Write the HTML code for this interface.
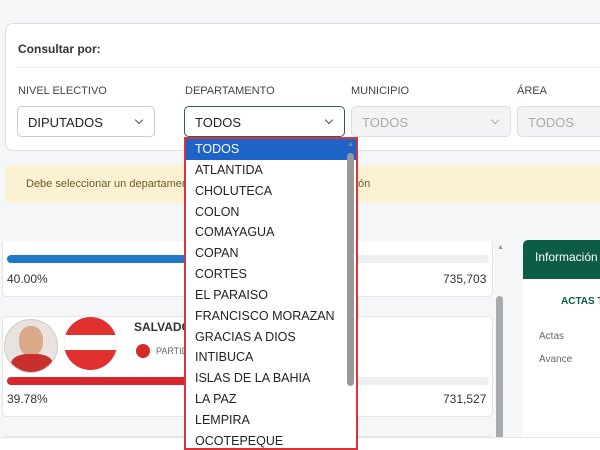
<!DOCTYPE html>
<html><head><style>
*{box-sizing:border-box;margin:0;padding:0}
html,body{width:600px;height:450px;overflow:hidden}
body{background:#f5f6f8;font-family:"Liberation Sans",sans-serif;position:relative;color:#333}
.abs{position:absolute;white-space:nowrap}
.card{left:5px;top:23px;width:620px;height:128px;background:#fff;border:1px solid #dcdfe3;border-radius:8px}
.lbl{font-size:11px;color:#444;top:85px}
.sel{top:106px;height:31px;border:1px solid #c8ccd1;border-radius:5px;background:#fff;font-size:13px;padding:8px 10px;color:#222}
.sel.dis{background:#f2f3f4;color:#aaa;border-color:#dcdfe2}
.chev{position:absolute;right:12px;top:10px;width:6px;height:6px;border-right:1.2px solid #555;border-bottom:1.2px solid #555;transform:rotate(45deg)}
.dis .chev{border-color:#aaa}
.alert{left:5px;top:165px;width:600px;height:38px;background:#fcf2d3;font-size:11px;color:#6b5a2a;padding:13px 0 0 21px}
.pc{background:#fff;border:1px solid #e2e4e7;border-radius:5px}
.dd{left:184px;top:137px;width:174px;height:313px;background:#fff;border:2px solid #d8343a;overflow:hidden}
.dd div{height:20.85px;font-size:12.5px;padding:3px 0 0 9px;color:#222}
</style></head><body>
<div class="abs card"></div>
<div class="abs" style="left:18px;top:42px;font-size:12px;font-weight:bold;color:#333">Consultar por:</div>
<div class="abs" style="left:17px;top:67px;width:590px;height:1px;background:#eceef0"></div>
<div class="abs lbl" style="left:18px">NIVEL ELECTIVO</div>
<div class="abs lbl" style="left:185px">DEPARTAMENTO</div>
<div class="abs lbl" style="left:351px">MUNICIPIO</div>
<div class="abs lbl" style="left:517px">ÁREA</div>
<div class="abs sel" style="left:17px;width:138px">DIPUTADOS<span class="chev"></span></div>
<div class="abs sel" style="left:184px;width:161px;border-color:#2f5d56">TODOS<span class="chev"></span></div>
<div class="abs sel dis" style="left:351px;width:160px">TODOS<span class="chev"></span></div>
<div class="abs sel dis" style="left:517px;width:100px">TODOS</div>
<div class="abs alert">Debe seleccionar un departamento y municipio para ver la información</div>
<div class="abs" style="left:0;top:241px;width:505px;height:196px;overflow:hidden">
 <div class="abs pc" style="left:2px;top:-20px;width:491px;height:76px">
  <div class="abs" style="left:4px;top:-5px;width:46px;height:20px;border-radius:0 0 23px 23px;background:#cfe0ef"></div>
  <div class="abs" style="left:66px;top:-5px;width:44px;height:20px;border-radius:0 0 22px 22px;background:#2a8fd0"></div>
  <div class="abs" style="left:4px;top:33px;width:482px;height:8px;border-radius:4px;background:#eceef0"></div>
  <div class="abs" style="left:4px;top:33px;width:200px;height:8px;border-radius:4px;background:#1f78c8"></div>
  <div class="abs" style="left:4px;top:50px;font-size:12px">40.00%</div>
  <div class="abs" style="left:440px;top:50px;font-size:12px">735,703</div>
 </div>
 <div class="abs pc" style="left:2px;top:75px;width:491px;height:101px">
  <div class="abs" style="left:1px;top:2px;width:54px;height:54px;border-radius:50%;background:#e8e3df;border:1px solid #ccc;overflow:hidden"><div class="abs" style="left:14px;top:6px;width:24px;height:30px;border-radius:45%;background:#d9a98a"></div><div class="abs" style="left:6px;top:34px;width:42px;height:24px;background:#c83030;border-radius:40% 40% 0 0"></div></div>
  <div class="abs" style="left:61px;top:0;width:53px;height:53px;border-radius:50%;background:#e03030;overflow:hidden"><div class="abs" style="left:0;top:18px;width:53px;height:15px;background:#fff"></div></div>
  <div class="abs" style="left:131px;top:3px;font-size:12px;font-weight:bold">SALVADOR NASRALLA SALUM</div>
  <div class="abs" style="left:133px;top:27px;width:14px;height:14px;border-radius:50%;background:#d42a2a"></div>
  <div class="abs" style="left:153px;top:29px;font-size:9px;color:#666">PARTIDO</div>
  <div class="abs" style="left:4px;top:60px;width:482px;height:8px;border-radius:4px;background:#eceef0"></div>
  <div class="abs" style="left:4px;top:60px;width:190px;height:8px;border-radius:4px;background:#d8262e"></div>
  <div class="abs" style="left:4px;top:75px;font-size:12px">39.78%</div>
  <div class="abs" style="left:440px;top:75px;font-size:12px">731,527</div>
 </div>
 <div class="abs pc" style="left:2px;top:195px;width:491px;height:40px"></div>
 <div class="abs" style="left:497px;top:3px;font-size:7px;color:#999">▲</div>
 <div class="abs" style="left:496px;top:55px;width:7px;height:145px;border-radius:4px;background:#a8abae"></div>
</div>
<div class="abs" style="left:523px;top:240px;width:80px;height:197px;background:#fff;border-radius:5px 5px 0 0"></div>
<div class="abs" style="left:523px;top:240px;width:80px;height:39px;background:#0d5c45;border-radius:5px 0 0 0;color:#fff;font-size:12px;padding:10px 0 0 12px;overflow:hidden">Información</div>
<div class="abs" style="left:561px;top:296px;font-size:10px;font-weight:bold;color:#0d5c45">ACTAS T</div>
<div class="abs" style="left:539px;top:331px;font-size:10px;color:#666">Actas</div>
<div class="abs" style="left:539px;top:354px;font-size:10px;color:#666">Avance</div>
<div class="abs" style="left:0;top:437px;width:600px;height:13px;background:#fff;border-top:1px solid #e5e7ea"></div>
<div class="abs dd">
 <div style="background:#1e63c8;color:#fff">TODOS</div>
 <div>ATLANTIDA</div><div>CHOLUTECA</div><div>COLON</div><div>COMAYAGUA</div><div>COPAN</div><div>CORTES</div><div>EL PARAISO</div><div>FRANCISCO MORAZAN</div><div>GRACIAS A DIOS</div><div>INTIBUCA</div><div>ISLAS DE LA BAHIA</div><div>LA PAZ</div><div>LEMPIRA</div><div>OCOTEPEQUE</div>
 <span class="abs" style="left:161px;top:2px;font-size:7px;color:#888">▲</span>
 <span class="abs" style="left:161px;top:14px;width:7px;height:233px;border-radius:4px;background:#999"></span>
</div>
</body></html>
